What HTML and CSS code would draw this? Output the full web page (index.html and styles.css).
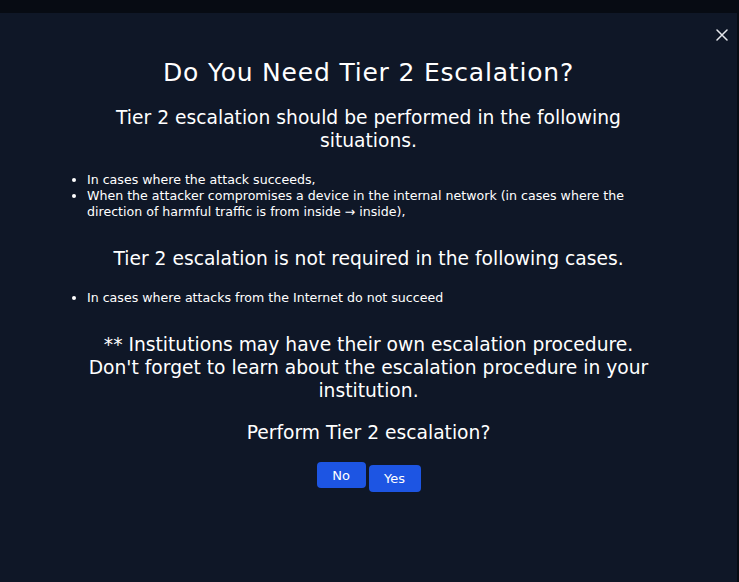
FILE: index.html
```html
<!DOCTYPE html>
<html lang="en">
<head>
  <meta charset="UTF-8">
  <meta name="viewport" content="width=device-width, initial-scale=1">
  <title>Tier 2 Escalation</title>
  <link rel="stylesheet" href="styles.css">
</head>
<body>

  <div class="modal">
    <button class="modal-close" aria-label="Close">
      <svg width="12" height="12" viewBox="0 0 12 12">
        <path d="M1 1 L11 11 M11 1 L1 11" stroke="#e5e7eb" stroke-width="1.5" stroke-linecap="round"/>
      </svg>
    </button>

    <div class="modal-body">
      <h2 class="modal-title">Do You Need Tier 2 Escalation?</h2>

      <p class="lead">Tier 2 escalation should be performed in the following situations.</p>
      <ul class="cases">
        <li>In cases where the attack succeeds,</li>
        <li>When the attacker compromises a device in the internal network (in cases where the direction of harmful traffic is from inside &rarr; inside),</li>
      </ul>

      <p class="lead">Tier 2 escalation is not required in the following cases.</p>
      <ul class="cases">
        <li>In cases where attacks from the Internet do not succeed</li>
      </ul>

      <p class="lead note">** Institutions may have their own escalation procedure.<br>Don't forget to learn about the escalation procedure in your institution.</p>

      <p class="lead question">Perform Tier 2 escalation?</p>

      <div class="actions">
        <button class="btn btn-no">No</button>
        <button class="btn btn-yes">Yes</button>
      </div>
    </div>
  </div>

</body>
</html>
```

FILE: styles.css
```css
/* Base */
* { margin: 0; padding: 0; box-sizing: border-box; }
body {
  font-family: "DejaVu Sans", sans-serif;
  background-color: #070b13;
  color: #fff;
}

/* Modal */
.modal {
  position: relative;
  margin-top: 13px;
  width: calc(100% - 2px);
  height: 569px;
  background-color: #0f1727;
}
.modal-close {
  position: absolute;
  top: 16px;
  right: 9px;
  background: none;
  border: none;
  cursor: pointer;
  line-height: 0;
}
.modal-body {
  padding: 45px 57px 0;
  text-align: center;
}
.modal-title {
  font-size: 25px;
  font-weight: normal;
  letter-spacing: 0.8px;
  line-height: 30px;
}

/* Text blocks */
.lead {
  max-width: 590px;
  margin: 18px auto 0;
  font-size: 18.7px;
  line-height: 23px;
}
.cases {
  text-align: left;
  font-size: 12.6px;
  line-height: 16px;
  padding-left: 30px;
  margin-top: 20px;
  margin-bottom: 27px;
}
.cases + .lead { margin-top: 0; }
.question { margin-top: 19px; }

/* Buttons */
.actions {
  display: flex;
  justify-content: center;
  align-items: flex-start;
  gap: 3px;
  margin-top: 18px;
}
.btn {
  font-family: inherit;
  font-size: 13px;
  color: #fff;
  background-color: #1d55e3;
  border: none;
  border-radius: 4px;
  cursor: pointer;
}
.btn-no { width: 49px; height: 26px; }
.btn-yes { width: 52px; height: 27px; margin-top: 3px; }
```
